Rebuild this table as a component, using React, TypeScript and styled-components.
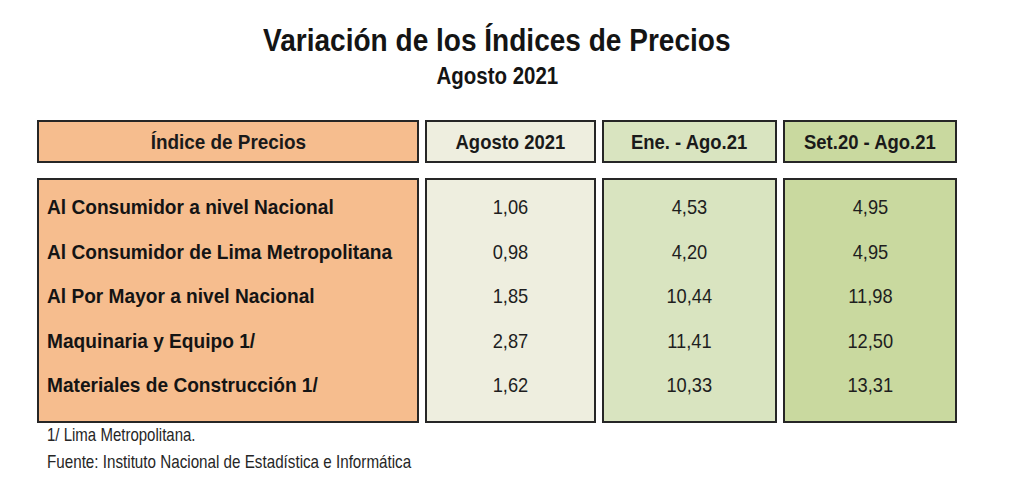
import React from "react";
import styled, { createGlobalStyle } from "styled-components";

const Global = createGlobalStyle`
  html, body { margin: 0; padding: 0; background: #ffffff; }
  body { font-family: "Liberation Sans", Arial, sans-serif; color: #1a1a1a; }
`;

type Tone = "orange" | "cream" | "light" | "green";

const toneColor: Record<Tone, string> = {
  orange: "#f6bd8e",
  cream: "#eeeedf",
  light: "#d9e4c0",
  green: "#c9d99f",
};

/* Narrow-face text: the original uses a condensed Helvetica-like face */
const Narrow = styled.span<{ $k: number; $origin?: "left" | "center" }>`
  display: inline-block;
  white-space: nowrap;
  transform: scaleX(${(p) => p.$k});
  transform-origin: ${(p) => (p.$origin === "left" ? "left center" : "center center")};
`;

const Page = styled.div`
  width: 1024px;
  height: 503px;
  box-sizing: border-box;
  padding: 22px 0 0 37px;
  overflow: hidden;
`;

const Sheet = styled.div`
  width: 920px;
  display: flex;
  flex-direction: column;
`;

const Title = styled.h1`
  margin: 0;
  text-align: center;
  font-size: 32px;
  line-height: 36px;
  font-weight: 700;
  color: #141414;
`;

const Subtitle = styled.h2`
  margin: 5px 0 0;
  text-align: center;
  font-size: 23px;
  line-height: 26px;
  font-weight: 700;
  color: #141414;
`;

const Table = styled.div`
  margin-top: 31px;
  display: grid;
  grid-template-columns: 382px 171px 175px 174px;
  column-gap: 6px;
  row-gap: 15px;
`;

const Box = styled.div<{ $tone: Tone }>`
  background: ${(p) => toneColor[p.$tone]};
  border: 2px solid #262626;
  box-sizing: border-box;
`;

const HeaderCell = styled(Box)`
  height: 43px;
  display: flex;
  align-items: center;
  justify-content: center;
  font-size: 21px;
  font-weight: 700;
  color: #1a1a1a;
`;

const BodyColumn = styled(Box)<{ $align: "left" | "center" }>`
  height: 245px;
  display: flex;
  flex-direction: column;
  align-items: ${(p) => (p.$align === "left" ? "flex-start" : "center")};
  padding: 5px 0 0 ${(p) => (p.$align === "left" ? "8px" : "0")};
`;

const Label = styled.div`
  height: 44.5px;
  display: flex;
  align-items: center;
  font-size: 21px;
  font-weight: 700;
  color: #141414;
`;

const Value = styled.div`
  height: 44.5px;
  display: flex;
  align-items: center;
  font-size: 21px;
  font-weight: 400;
  color: #1e1e1e;
`;

const Notes = styled.div`
  margin-top: 2px;
  padding-left: 10px;
  display: flex;
  flex-direction: column;
  align-items: flex-start;
  gap: 7px;
  font-size: 19px;
  line-height: 20px;
  color: #262626;
`;

const rows = [
  { label: "Al Consumidor a nivel Nacional", v: ["1,06", "4,53", "4,95"] },
  { label: "Al Consumidor de Lima Metropolitana", v: ["0,98", "4,20", "4,95"] },
  { label: "Al Por Mayor a nivel Nacional", v: ["1,85", "10,44", "11,98"] },
  { label: "Maquinaria y Equipo 1/", v: ["2,87", "11,41", "12,50"] },
  { label: "Materiales de Construcción 1/", v: ["1,62", "10,33", "13,31"] },
];

const valueCols: { head: string; tone: Tone }[] = [
  { head: "Agosto 2021", tone: "cream" },
  { head: "Ene. - Ago.21", tone: "light" },
  { head: "Set.20 - Ago.21", tone: "green" },
];

export default function App() {
  return (
    <Page>
      <Global />
      <Sheet>
        <Title>
          <Narrow $k={0.876}>Variación de los Índices de Precios</Narrow>
        </Title>
        <Subtitle>
          <Narrow $k={0.89}>Agosto 2021</Narrow>
        </Subtitle>
        <Table>
          <HeaderCell $tone="orange">
            <Narrow $k={0.9}>Índice de Precios</Narrow>
          </HeaderCell>
          {valueCols.map((c) => (
            <HeaderCell key={c.head} $tone={c.tone}>
              <Narrow $k={0.88}>{c.head}</Narrow>
            </HeaderCell>
          ))}
          <BodyColumn $tone="orange" $align="left">
            {rows.map((r) => (
              <Label key={r.label}>
                <Narrow $k={0.91} $origin="left">
                  {r.label}
                </Narrow>
              </Label>
            ))}
          </BodyColumn>
          {valueCols.map((c, i) => (
            <BodyColumn key={c.head} $tone={c.tone} $align="center">
              {rows.map((r) => (
                <Value key={r.label}>
                  <Narrow $k={0.87}>{r.v[i]}</Narrow>
                </Value>
              ))}
            </BodyColumn>
          ))}
        </Table>
        <Notes>
          <Narrow $k={0.79} $origin="left">
            1/ Lima Metropolitana.
          </Narrow>
          <Narrow $k={0.8} $origin="left">
            Fuente: Instituto Nacional de Estadística e Informática
          </Narrow>
        </Notes>
      </Sheet>
    </Page>
  );
}
